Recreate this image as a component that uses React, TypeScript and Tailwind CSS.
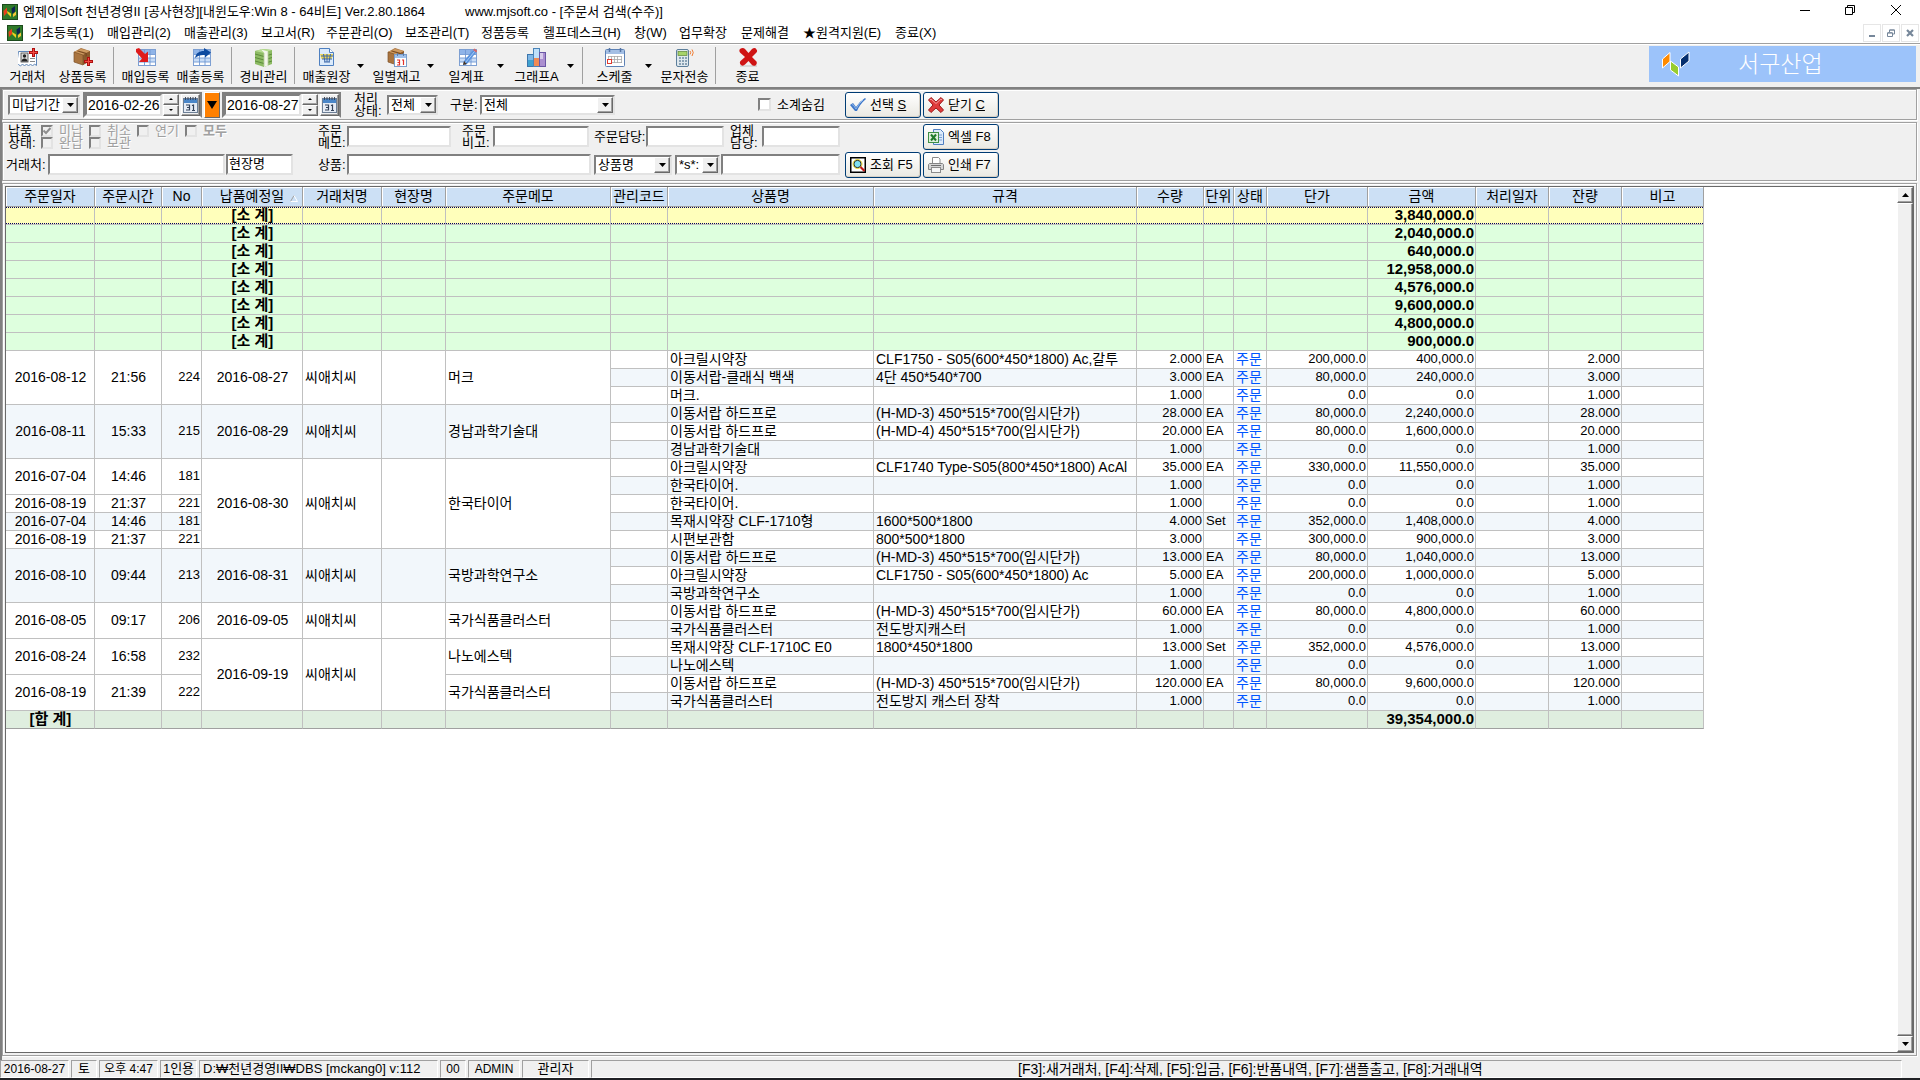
import React, { ReactNode } from 'react';

const UI = "font-['Liberation_Sans','Noto_Sans_CJK_KR',sans-serif]";
const SUNKEN = 'border-2 border-t-[#808080] border-l-[#808080] border-r-[#e3e3e3] border-b-[#e3e3e3]';
const RAISED =
  'bg-[#f0f0f0] border border-t-white border-l-white border-r-[#696969] border-b-[#696969] shadow-[inset_-1px_-1px_0_#a0a0a0]';

/* ---------- icons ---------- */

function AppIcon() {
  return (
    <svg viewBox="0 0 16 16" className="size-4 shrink-0" aria-hidden="true">
      <rect width="16" height="16" fill="#1c4a1c" />
      <rect x="1" y="1" width="14" height="14" fill="#2f7a2a" />
      <path d="M1.500 7 5 3.500V9l-3 3z" fill="#e8401c" />
      <path d="M5 7l4 2.500V13L5.500 9.500z" fill="#f0d21e" />
      <path d="M9.500 4.500L13 2v5.500L10 10z" fill="#0d2350" />
      <path d="M11 10l3-2.500V11l-3 2z" fill="#f5c63a" />
    </svg>
  );
}

function Svg({ children }: { children: ReactNode }) {
  return (
    <svg viewBox="0 0 20 20" className="size-5 shrink-0" aria-hidden="true">
      {children}
    </svg>
  );
}

const RedPlus = ({ x, y }: { x: number; y: number }) => (
  <g transform={`translate(${x} ${y})`}>
    <path d="M3 0h3v3h3v3H6v3H3V6H0V3h3z" fill="#b01010" />
    <path d="M4 1h1v3h3v1H5v3H4V5H1V4h3z" fill="#f24a42" />
  </g>
);

const Box = () => (
  <g>
    <path d="M1 4 8 0l9 3v10l-7 4-9-3z" fill="#a9743f" />
    <path d="M1 4 8 1l9 2-7 4z" fill="#cf9c62" />
    <path d="M10 7l7-4v10l-7 4z" fill="#8a5a2d" />
    <path d="M5 2.600l9 2.400v3l-1.500.8V6L4 3.200z" fill="#7a4b22" />
    <path d="M1 4l9 3v10l-9-3z" fill="none" stroke="#7d5128" strokeWidth=".7" />
  </g>
);

const BlueGrid = () => (
  <g>
    <rect x="2.500" y="1.500" width="17" height="16" fill="#fff" stroke="#7d9fd2" />
    <rect x="3" y="2" width="16" height="4" fill="#8fb4e8" />
    <rect x="3" y="10" width="16" height="4" fill="#c8dcf6" />
    <path d="M3 6.500h16M3 10h16M3 14h16M8.500 2v15M14 2v15" stroke="#6f97d2" strokeWidth=".9" />
  </g>
);

const CardIcon = () => (
  <Svg>
    <path d="M.5 3.500h18v14l-2-1.500-2 2-2-2-2 2-2-2-2 2-2-2-2 2-2-1.500-2 1z" fill="#fff" stroke="#5f86b8" />
    <rect x="3" y="5" width="7" height="9" fill="#d9d9d9" stroke="#444" strokeWidth=".8" />
    <circle cx="6.500" cy="8" r="1.700" fill="#222" />
    <path d="M3.500 13.500c0-4 6-4 6 0z" fill="#222" />
    <path d="M12 10.500h5M12 13.500h5" stroke="#888" />
    <RedPlus x={11} y={0} />
  </Svg>
);
const ProductIcon = () => (
  <Svg>
    <Box />
    <RedPlus x={11} y={9} />
  </Svg>
);
const InboundIcon = () => (
  <Svg>
    <BlueGrid />
    <path d="M0 1l3-1 6 6 3-2.500V14H3l3-3.500L0 4z" fill="#df1b1b" />
  </Svg>
);
const OutboundIcon = () => (
  <Svg>
    <BlueGrid />
    <path d="M4 10C5 5 8 3 13 3V0l7 4.500-6 5V7C10 6.500 7 7.500 4 10z" fill="#0e4ba0" />
  </Svg>
);
const MoneyIcon = () => (
  <Svg>
    <path d="M1 3l8-2 9 1v14l-8 3-9-3z" fill="#8dbb63" />
    <path d="M1 3l8-2 9 1-8 3z" fill="#b7dc91" />
    <path d="M1 6l9 2.500L18 6M1 9.500l9 2.500 8-2.500M1 13l9 2.500 8-2.500" stroke="#5d8c3b" fill="none" />
    <path d="M7 1.500l7 2v14l-4 1.500V4.500z" fill="#f3f6ea" />
    <path d="M10 5v13M14 4v13" stroke="#b7c9a0" strokeWidth=".8" />
  </Svg>
);
const LedgerIcon = () => (
  <Svg>
    <path d="M2.500.5h10l4 4v13h-14z" fill="#dcebfb" stroke="#4f80c0" />
    <path d="M12.500.5v4h4" fill="#fff" stroke="#4f80c0" />
    <path d="M3 6h13l-1.500 5h-10z" fill="#f2d750" />
    <path d="M4 8h12M5 11h10M6.500 6l1.500 8M10 6v8M13.500 6L12 14M7 14h6" stroke="#3b67a8" fill="none" />
  </Svg>
);
const StockIcon = () => (
  <Svg>
    <Box />
    <rect x="7.500" y="6.500" width="12" height="12" fill="#fff" stroke="#7a9cc9" />
    <rect x="8" y="7" width="11" height="3" fill="#9fc0ea" />
    <path d="M10.500 5v3M16.500 5v3" stroke="#5d7ea8" />
    <path d="M10 12h2.500v5H10M10.500 14.500h2M15 12h1.500v5" stroke="#e2322a" strokeWidth="1.200" fill="none" />
  </Svg>
);
const DailyIcon = () => (
  <Svg>
    <BlueGrid />
    <path d="M6 17l1-4L16 2l3 2.500L10 16z" fill="#5a93dd" />
    <path d="M16 2l1.500-1.500 3 2.500L19 4.500z" fill="#d46868" />
    <path d="M6 17l1-4 3 3z" fill="#4a3520" />
    <path d="M8.500 14.500l9-11" stroke="#a9cdf8" />
  </Svg>
);
const ChartIcon = () => (
  <Svg>
    <rect x=".5" y="6.500" width="6" height="12" fill="#7fb7e6" stroke="#3c76ad" />
    <rect x="6.500" y=".5" width="6" height="18" fill="#bfe0fa" stroke="#4b84b8" />
    <rect x="12.500" y="4.500" width="6" height="14" fill="#ab8fd0" stroke="#6a57a5" />
    <rect x="7" y="10" width="5" height="8" fill="#f08a54" />
    <rect x="1" y="12" width="5" height="6" fill="#3fa2cf" />
    <rect x="13" y="5" width="3" height="6" fill="#d6caea" />
  </Svg>
);
const ScheduleIcon = () => (
  <Svg>
    <rect x=".5" y="1.500" width="19" height="17" rx="1" fill="#fff" stroke="#5c81b5" />
    <rect x="1" y="2" width="18" height="4" fill="#a4bfe4" />
    <path d="M4.500 0v4M15.500 0v4" stroke="#5675a4" strokeWidth="1.500" />
    <path d="M3 8.500h14M3 11.500h14M3 14.500h14M3.500 8v7M6.500 8v7M9.500 8v7M12.500 8v7M16.500 8v7" stroke="#a8a8a8" strokeWidth=".8" />
    <rect x="2.500" y="11.500" width="4" height="4" fill="#fff" stroke="#e23b2f" />
  </Svg>
);
const SmsIcon = () => (
  <Svg>
    <rect x="1.500" y="1.500" width="12" height="17" rx="1.500" fill="#dfe8ee" stroke="#5d7f9b" />
    <rect x="3" y="3.500" width="9" height="4" fill="#a6d36a" stroke="#5f8737" strokeWidth=".7" />
    <path d="M4 10h8M4 13h8M4 16h8" stroke="#6f8ba3" strokeWidth="1.600" strokeDasharray="2 1" />
    <path d="M15 3q1.500 1.500 0 3.500M17 1.500q2.500 3 0 6.500" stroke="#ef7b30" fill="none" />
  </Svg>
);
const ExitIcon = () => (
  <Svg>
    <rect x="2" y="17" width="17" height="2" fill="#d8d8d8" />
    <path d="M2 1q3-2 5 0l3.500 4L14 1q3-2 4.500.5Q20 3 18 5l-4 4 4.500 4.500q1 2.500-1 4-2.500 1-4-1L10.500 13 7 16.500q-2 2-4 .5-2-2-.5-4L7 9 2.500 5Q.5 3 2 1z" fill="#cf1414" />
  </Svg>
);

const SelectIcon = () => (
  <svg viewBox="0 0 16 14" className="h-3.5 w-4" aria-hidden="true">
    <path d="M0 7l3-2 3 4q4-6 9-9l1 1Q10 6 7 13H5z" fill="#3f78c9" />
    <path d="M2 7l1-.5L6 11q3-6 7-9" stroke="#8fb7ea" fill="none" />
  </svg>
);
const CloseIcon = () => (
  <svg viewBox="0 0 16 16" className="size-4" aria-hidden="true">
    <path d="M.5 3 3 .5 8 5l5-4.500L15.500 3 11 8l4.500 5L13 15.500 8 11l-5 4.500L.5 13 5 8z" fill="#e03b3b" stroke="#9c1a1a" />
    <path d="M2 3l1-1 5 4.500L13 2l1 1" stroke="#f59b9b" fill="none" />
  </svg>
);
const ExcelIcon = () => (
  <svg viewBox="0 0 16 16" className="size-4" aria-hidden="true">
    <path d="M5.500.5h7l3 3v12h-10z" fill="#dceafa" stroke="#4f7fc0" />
    <path d="M10 6h4M10 8.500h4M10 11h4" stroke="#7ba0d4" />
    <rect x=".5" y="3.500" width="10" height="10" fill="#dff0dc" stroke="#3f8f45" />
    <path d="M3 5.500l5 6M8 5.500l-5 6" stroke="#1f7a2a" strokeWidth="2" />
  </svg>
);
const FindIcon = () => (
  <svg viewBox="0 0 16 16" className="size-4" aria-hidden="true">
    <rect x=".75" y=".75" width="14.500" height="14.500" fill="#fff" stroke="#000" strokeWidth="1.500" />
    <circle cx="7.500" cy="7" r="3.700" fill="#7fe0f2" stroke="#111" />
    <circle cx="7.500" cy="7" r="4.500" fill="none" stroke="#e3d31b" strokeWidth=".9" />
    <path d="M10.500 10l4 4" stroke="#c01818" strokeWidth="2.200" />
  </svg>
);
const PrintIcon = () => (
  <svg viewBox="0 0 16 16" className="size-4" aria-hidden="true">
    <path d="M4.500 6V.5h6l1.500 1.500v4" fill="#fff" stroke="#8b8b8b" />
    <path d="M1.500 6.500h13l1 1v5H.5v-5z" fill="#d5d5d5" stroke="#858585" />
    <rect x="3.500" y="10.500" width="9" height="5" fill="#f7f7f7" stroke="#8b8b8b" />
    <path d="M3 8.500h10" stroke="#6e6e6e" />
  </svg>
);
const CalendarIcon = () => (
  <svg viewBox="0 0 15 16" className="h-4 w-[15px]" aria-hidden="true">
    <rect x=".5" y="1.500" width="14" height="14" fill="#e6ecf5" stroke="#6d7f96" />
    <rect x="1" y="2" width="13" height="4" fill="#4a86c8" />
    <path d="M2.500 0v3M5 0v3M7.500 0v3M10 0v3M12.500 0v3" stroke="#333f52" strokeWidth=".9" />
    <path d="M3 8h3.500v5H3M4 10.500h2.500M9 8.500L10.500 8v5.500M9 13.500h3" stroke="#34435a" strokeWidth="1.200" fill="none" />
  </svg>
);
const Tri = ({ up = false, size = 'h-1 w-[7px]' }: { up?: boolean; size?: string }) => (
  <svg viewBox="0 0 8 4" preserveAspectRatio="none" className={size} aria-hidden="true">
    <path d={up ? 'M0 4 4 0l4 4z' : 'M0 0h8L4 4z'} fill="#000" />
  </svg>
);

/* ---------- form parts ---------- */

function Combo({ label, value, className }: { label: string; value: string; className: string }) {
  return (
    <div className={`relative flex h-5 shrink-0 bg-white ${SUNKEN} ${className}`}>
      <select
        aria-label={label}
        defaultValue={value}
        className="min-w-0 flex-1 appearance-none bg-transparent pl-0.5 text-[13px] leading-4 outline-none"
      >
        <option>{value}</option>
      </select>
      <span className={`pointer-events-none absolute inset-y-0 right-0 flex w-4 items-center justify-center ${RAISED}`}>
        <Tri />
      </span>
    </div>
  );
}

function TextBox({ label, value = '', className }: { label: string; value?: string; className: string }) {
  return (
    <input
      type="text"
      aria-label={label}
      defaultValue={value}
      className={`h-[21px] shrink-0 bg-white px-px pb-1 text-[13px] leading-4 outline-none ${SUNKEN} ${className}`}
    />
  );
}

function DateBox({ label, value }: { label: string; value: string }) {
  return (
    <div className="flex h-[26px] w-[119px] shrink-0 items-center border-2 border-t-[#808080] border-l-[#808080] border-r-[#808080] border-b-white">
      <input
        type="text"
        aria-label={label}
        defaultValue={value}
        className={`h-[22px] w-[77px] bg-white pl-px text-sm leading-4 outline-none ${SUNKEN}`}
      />
      <div className="ml-px flex w-4 flex-col">
        <button type="button" aria-label={`${label} 증가`} className={`flex h-[11px] items-center justify-center ${RAISED}`}>
          <Tri up size="h-0.5 w-1" />
        </button>
        <button type="button" aria-label={`${label} 감소`} className={`flex h-[11px] items-center justify-center ${RAISED}`}>
          <Tri size="h-0.5 w-1" />
        </button>
      </div>
      <button type="button" aria-label={`${label} 달력`} className={`ml-0.5 flex h-[22px] w-[19px] items-center justify-center ${RAISED}`}>
        <CalendarIcon />
      </button>
    </div>
  );
}

function TwoLine({ a, b, className }: { a: string; b: string; className: string }) {
  return (
    <span className={`shrink-0 text-[13px] leading-3 ${className}`}>
      {a}
      <br />
      {b}:
    </span>
  );
}

function Check({ label, checked = false, bold = false, className = 'w-12' }: { label: string; checked?: boolean; bold?: boolean; className?: string }) {
  return (
    <label className={`relative flex h-3 items-center text-[13px] leading-3 text-[#a0a0a0] [text-shadow:1px_1px_0_#fff] ${className}`}>
      <input type="checkbox" disabled defaultChecked={checked} className={`size-3 shrink-0 appearance-none ${SUNKEN}`} />
      {checked && (
        <svg viewBox="0 0 8 8" className="absolute left-0.5 top-0.5 size-2" aria-hidden="true">
          <path d="M.5 3.500 3 6l4.500-5" stroke="#8f8f8f" strokeWidth="2" fill="none" />
        </svg>
      )}
      <span className={bold ? 'ml-1.5 font-bold' : 'ml-1.5'}>{label}</span>
    </label>
  );
}

function Action({ icon, children }: { icon: ReactNode; children: ReactNode }) {
  return (
    <button
      type="button"
      className="flex h-[26px] w-[76px] shrink-0 items-center gap-1 whitespace-nowrap rounded-[3px] border border-[#003c74] bg-gradient-to-b from-white to-[#eae9e2] pl-1 text-[13px] shadow-[inset_-1px_-1px_0_#d6d0c5]"
    >
      {icon}
      <span>{children}</span>
    </button>
  );
}

/* ---------- bars ---------- */

const MENU: [string, string][] = [
  ['기초등록(1)', 'w-[77px]'],
  ['매입관리(2)', 'w-[77px]'],
  ['매출관리(3)', 'w-[77px]'],
  ['보고서(R)', 'w-[65px]'],
  ['주문관리(O)', 'w-[79px]'],
  ['보조관리(T)', 'w-[76px]'],
  ['정품등록', 'w-[62px]'],
  ['헬프데스크(H)', 'w-[91px]'],
  ['창(W)', 'w-[45px]'],
  ['업무확장', 'w-[62px]'],
  ['문제해결', 'w-[62px]'],
  ['★원격지원(E)', 'w-[92px]'],
  ['종료(X)', 'w-[50px]'],
];

type Tool = { label: string; icon: ReactNode; drop?: boolean } | null;
const TOOLS: Tool[] = [
  { label: '거래처', icon: <CardIcon /> },
  { label: '상품등록', icon: <ProductIcon /> },
  null,
  { label: '매입등록', icon: <InboundIcon /> },
  { label: '매출등록', icon: <OutboundIcon /> },
  null,
  { label: '경비관리', icon: <MoneyIcon /> },
  null,
  { label: '매출원장', icon: <LedgerIcon />, drop: true },
  { label: '일별재고', icon: <StockIcon />, drop: true },
  { label: '일계표', icon: <DailyIcon />, drop: true },
  { label: '그래프A', icon: <ChartIcon />, drop: true },
  null,
  { label: '스케줄', icon: <ScheduleIcon />, drop: true },
  { label: '문자전송', icon: <SmsIcon /> },
  null,
  { label: '종료', icon: <ExitIcon /> },
];

function TitleBar() {
  return (
    <header className="flex h-[23px] shrink-0 items-center bg-white pl-0.5 text-[13px]">
      <AppIcon />
      <h1 className="ml-[5px] w-[442px] whitespace-nowrap">엠제이Soft 천년경영II [공사현장][내윈도우:Win 8 - 64비트] Ver.2.80.1864</h1>
      <span className="flex-1 whitespace-nowrap">www.mjsoft.co - [주문서 검색(수주)]</span>
      <div className="flex pb-1">
        <button type="button" aria-label="최소화" className="flex h-4 w-[45px] items-center justify-center">
          <svg viewBox="0 0 10 10" className="size-2.5"><path d="M0 5.500h10" stroke="#000" /></svg>
        </button>
        <button type="button" aria-label="이전 크기로" className="flex h-4 w-[45px] items-center justify-center">
          <svg viewBox="0 0 10 10" className="size-2.5"><path d="M.5 2.500h7v7h-7zM2.500 2.500v-2h7v7h-2" fill="none" stroke="#000" /></svg>
        </button>
        <button type="button" aria-label="닫기" className="flex h-4 w-[48px] items-center justify-center">
          <svg viewBox="0 0 10 10" className="size-2.5"><path d="M0 0l10 10M10 0L0 10" stroke="#000" /></svg>
        </button>
      </div>
    </header>
  );
}

function MenuBar() {
  const box = 'flex size-[18px] items-center justify-center border border-[#e6e6e6]';
  return (
    <nav className="flex h-5 shrink-0 items-center bg-white pl-[7px] pr-px text-[13px]">
      <AppIcon />
      <ul className="ml-[7px] flex flex-1">
        {MENU.map(([t, w]) => (
          <li key={t} className={`whitespace-nowrap ${w}`}>
            <button type="button">{t}</button>
          </li>
        ))}
      </ul>
      <div className="flex gap-px">
        <button type="button" aria-label="창 최소화" className={box}>
          <svg viewBox="0 0 8 8" className="size-2"><path d="M1 7h6" stroke="#76879a" strokeWidth="2" /></svg>
        </button>
        <button type="button" aria-label="창 복원" className={box}>
          <svg viewBox="0 0 8 8" className="size-2"><path d="M.5 4h5v3.500h-5zM.5 3.700h5M2.500 3V1h5v4H6M2.500 1h5" fill="none" stroke="#76879a" /></svg>
        </button>
        <button type="button" aria-label="창 닫기" className={box}>
          <svg viewBox="0 0 8 8" className="size-2"><path d="M1 1l6 6M7 1L1 7" stroke="#76879a" strokeWidth="2.200" /></svg>
        </button>
      </div>
    </nav>
  );
}

function ToolBar() {
  return (
    <div className="flex h-11 shrink-0 border-t border-[#a0a0a0] bg-[#f0f0f0] pr-1 shadow-[inset_0_1px_0_#fff]">
      {TOOLS.map((t, i) =>
        t === null ? (
          <span key={i} className="flex w-2 px-[3px] py-[3px]">
            <span className="w-px bg-[#a0a0a0]" />
          </span>
        ) : (
          <div key={i} className="flex">
            <button type="button" className="flex w-[55px] flex-col items-center whitespace-nowrap pt-1 text-[13px] leading-[18px]">
              {t.icon}
              {t.label}
            </button>
            {t.drop && (
              <button type="button" aria-label={`${t.label} 메뉴`} className="flex w-[15px] items-center pl-[3px]">
                <Tri />
              </button>
            )}
          </div>
        ),
      )}
      <div className="my-0.5 ml-auto flex h-9 w-[267px] items-center bg-[#9cc3fa] text-white">
        <svg viewBox="0 0 28 26" className="ml-[13px] h-[26px] w-7" aria-hidden="true">
          <path d="M.5 8 8 1.500v9L.5 17z" fill="#ff8a00" stroke="#fff" />
          <path d="M8.500 10l8 6v9l-8-6z" fill="#98cc2e" stroke="#fff" />
          <path d="M18.500 8 27 1v9l-8.500 7z" fill="#052f6e" stroke="#fff" />
        </svg>
        <span className="ml-12 text-[23px] font-light leading-8">서구산업</span>
      </div>
    </div>
  );
}

function SearchPanel() {
  const frame = 'border border-[#a0a0a0] shadow-[inset_1px_1px_0_#fff,1px_1px_0_#fff]';
  return (
    <form className="flex shrink-0 flex-col gap-0.5 text-[13px]">
      <div className={`flex h-[31px] items-center pl-[5px] ${frame}`}>
        <Combo label="기간 구분" value="미납기간" className="w-[72px]" />
        <div className="ml-[3px] flex items-center gap-0.5">
          <DateBox label="시작일" value="2016-02-26" />
          <button
            type="button"
            aria-label="기간 선택"
            className="flex h-[26px] w-4 items-center justify-center border border-t-white border-l-white border-r-[#696969] border-b-[#696969] bg-[#ff8000]"
          >
            <Tri size="h-2 w-2.5" />
          </button>
          <DateBox label="종료일" value="2016-08-27" />
        </div>
        <TwoLine a="처리" b="상태" className="ml-[13px] w-[33px]" />
        <Combo label="처리상태" value="전체" className="w-[51px]" />
        <span className="ml-3 w-[30px]">구분:</span>
        <Combo label="구분" value="전체" className="w-[135px]" />
        <label className="ml-[143px] flex w-[87px] items-center gap-1.5">
          <input type="checkbox" className={`size-[13px] appearance-none bg-white ${SUNKEN}`} />
          소계숨김
        </label>
        <div className="flex gap-0.5">
          <Action icon={<SelectIcon />}>선택 <u>S</u></Action>
          <Action icon={<CloseIcon />}>닫기 <u>C</u></Action>
        </div>
      </div>

      <div className={`flex h-[59px] flex-col gap-px pl-px ${frame}`}>
        <div className="flex h-[27px] items-center">
          <TwoLine a="납품" b="상태" className="ml-1 w-[33px]" />
          <div className="flex w-[277px] flex-col">
            <div className="flex">
              <Check label="미납" checked />
              <Check label="취소" />
              <Check label="연기" />
              <Check label="모두" bold />
            </div>
            <div className="flex">
              <Check label="완납" />
              <Check label="보관" />
            </div>
          </div>
          <TwoLine a="주문" b="메모" className="w-[29px]" />
          <TextBox label="주문메모" className="w-[104px]" />
          <TwoLine a="주문" b="비고" className="ml-[11px] w-[31px]" />
          <TextBox label="주문비고" className="w-24" />
          <span className="ml-[5px] w-[52px] whitespace-nowrap">주문담당:</span>
          <TextBox label="주문담당" className="w-[78px]" />
          <TwoLine a="업체" b="담당" className="ml-1.5 w-8" />
          <TextBox label="업체담당" className="w-[78px]" />
          <div className="ml-[83px]">
            <Action icon={<ExcelIcon />}>엑셀 F8</Action>
          </div>
        </div>
        <div className="flex h-[27px] items-center">
          <span className="ml-0.5 w-[42px] whitespace-nowrap">거래처:</span>
          <TextBox label="거래처" className="w-[177px]" />
          <TextBox label="현장명" value="현장명" className="ml-px w-[67px]" />
          <span className="ml-[25px] w-[29px] whitespace-nowrap">상품:</span>
          <TextBox label="상품" className="w-[244px]" />
          <Combo label="검색 항목" value="상품명" className="ml-[3px] w-[78px]" />
          <Combo label="검색 방식" value="*s*:" className="ml-[3px] w-[45px]" />
          <TextBox label="검색어" className="ml-px w-[119px]" />
          <div className="ml-[5px] flex gap-0.5">
            <Action icon={<FindIcon />}>조회 F5</Action>
            <Action icon={<PrintIcon />}>인쇄 F7</Action>
          </div>
        </div>
      </div>
    </form>
  );
}

/* ---------- order table ---------- */

const COLS: [string, string][] = [
  ['주문일자', 'w-[89px]'],
  ['주문시간', 'w-[67px]'],
  ['No', 'w-[40px]'],
  ['납품예정일', 'w-[101px]'],
  ['거래처명', 'w-[79px]'],
  ['현장명', 'w-[64px]'],
  ['주문메모', 'w-[165px]'],
  ['관리코드', 'w-[57px]'],
  ['상품명', 'w-[206px]'],
  ['규격', 'w-[263px]'],
  ['수량', 'w-[67px]'],
  ['단위', 'w-[30px]'],
  ['상태', 'w-[33px]'],
  ['단가', 'w-[101px]'],
  ['금액', 'w-[108px]'],
  ['처리일자', 'w-[73px]'],
  ['잔량', 'w-[73px]'],
  ['비고', 'w-[82px]'],
];

const SUBTOTALS = ['3,840,000.0', '2,040,000.0', '640,000.0', '12,958,000.0', '4,576,000.0', '9,600,000.0', '4,800,000.0', '900,000.0'];

type Row = {
  order?: [number, string, string, string];
  due?: [number, string];
  memo?: [number, string];
  d: [string, string, string, string, string, string];
};

const ROWS: Row[] = [
  { order: [3, '2016-08-12', '21:56', '224'], due: [3, '2016-08-27'], memo: [3, '머크'], d: ['아크릴시약장', 'CLF1750 - S05(600*450*1800) Ac,갈투', '2.000', 'EA', '200,000.0', '400,000.0'] },
  { d: ['이동서랍-클래식 백색', '4단 450*540*700', '3.000', 'EA', '80,000.0', '240,000.0'] },
  { d: ['머크.', '', '1.000', '', '0.0', '0.0'] },
  { order: [3, '2016-08-11', '15:33', '215'], due: [3, '2016-08-29'], memo: [3, '경남과학기술대'], d: ['이동서랍 하드프로', '(H-MD-3) 450*515*700(임시단가)', '28.000', 'EA', '80,000.0', '2,240,000.0'] },
  { d: ['이동서랍 하드프로', '(H-MD-4) 450*515*700(임시단가)', '20.000', 'EA', '80,000.0', '1,600,000.0'] },
  { d: ['경남과학기술대', '', '1.000', '', '0.0', '0.0'] },
  { order: [2, '2016-07-04', '14:46', '181'], due: [5, '2016-08-30'], memo: [5, '한국타이어'], d: ['아크릴시약장', 'CLF1740 Type-S05(800*450*1800) AcAl', '35.000', 'EA', '330,000.0', '11,550,000.0'] },
  { d: ['한국타이어.', '', '1.000', '', '0.0', '0.0'] },
  { order: [1, '2016-08-19', '21:37', '221'], d: ['한국타이어.', '', '1.000', '', '0.0', '0.0'] },
  { order: [1, '2016-07-04', '14:46', '181'], d: ['목재시약장 CLF-1710형', '1600*500*1800', '4.000', 'Set', '352,000.0', '1,408,000.0'] },
  { order: [1, '2016-08-19', '21:37', '221'], d: ['시편보관함', '800*500*1800', '3.000', '', '300,000.0', '900,000.0'] },
  { order: [3, '2016-08-10', '09:44', '213'], due: [3, '2016-08-31'], memo: [3, '국방과학연구소'], d: ['이동서랍 하드프로', '(H-MD-3) 450*515*700(임시단가)', '13.000', 'EA', '80,000.0', '1,040,000.0'] },
  { d: ['아크릴시약장', 'CLF1750 - S05(600*450*1800) Ac', '5.000', 'EA', '200,000.0', '1,000,000.0'] },
  { d: ['국방과학연구소', '', '1.000', '', '0.0', '0.0'] },
  { order: [2, '2016-08-05', '09:17', '206'], due: [2, '2016-09-05'], memo: [2, '국가식품클러스터'], d: ['이동서랍 하드프로', '(H-MD-3) 450*515*700(임시단가)', '60.000', 'EA', '80,000.0', '4,800,000.0'] },
  { d: ['국가식품클러스터', '전도방지캐스터', '1.000', '', '0.0', '0.0'] },
  { order: [2, '2016-08-24', '16:58', '232'], due: [4, '2016-09-19'], memo: [2, '나노에스텍'], d: ['목재시약장 CLF-1710C E0', '1800*450*1800', '13.000', 'Set', '352,000.0', '4,576,000.0'] },
  { d: ['나노에스텍', '', '1.000', '', '0.0', '0.0'] },
  { order: [2, '2016-08-19', '21:39', '222'], memo: [2, '국가식품클러스터'], d: ['이동서랍 하드프로', '(H-MD-3) 450*515*700(임시단가)', '120.000', 'EA', '80,000.0', '9,600,000.0'] },
  { d: ['국가식품클러스터', '전도방지 캐스터 장착', '1.000', '', '0.0', '0.0'] },
];

const CELL = 'h-[18px] overflow-hidden whitespace-nowrap border-r border-b border-[#c0c0c0] pl-0.5 pr-px leading-4 pb-px';
const FOCUS =
  'bg-[#ffffbb] bg-[image:repeating-linear-gradient(90deg,#000060_0_1px,transparent_1px_2px),repeating-linear-gradient(90deg,#000060_0_1px,transparent_1px_2px)] bg-[length:100%_1px,100%_1px] bg-[position:0_0,0_100%] bg-no-repeat bg-origin-padding';

function SumRow({ labelCol, label, amount, bg }: { labelCol: number; label: string; amount: string; bg: string }) {
  return (
    <tr>
      {COLS.map(([name], i) => (
        <td key={name} className={`${CELL} ${bg} text-[15px] font-bold ${i === 14 ? 'text-right' : 'text-center'}`}>
          {i === labelCol ? label : i === 14 ? amount : null}
        </td>
      ))}
    </tr>
  );
}

function OrderTable() {
  return (
    <table className="w-[1698px] table-fixed border-separate border-spacing-0 text-sm">
      <colgroup>
        {COLS.map(([name, w]) => (
          <col key={name} className={w} />
        ))}
      </colgroup>
      <thead>
        <tr>
          {COLS.map(([name]) => (
            <th
              key={name}
              scope="col"
              className="relative h-5 whitespace-nowrap border-r border-b border-[#a0a0a0] bg-[#cce0f5] p-0 font-normal leading-[19px] shadow-[inset_1px_1px_0_#fff]"
            >
              {name}
              {name === '납품예정일' && (
                <svg viewBox="0 0 8 7" className="absolute bottom-1 right-1 h-[7px] w-2" aria-hidden="true">
                  <path d="M.5 6.500 4 .5" stroke="#a0a0a0" />
                  <path d="M4 .5l3.500 6h-7" stroke="#fff" fill="none" />
                </svg>
              )}
            </th>
          ))}
        </tr>
      </thead>
      <tbody>
        {SUBTOTALS.map((amount, i) => (
          <SumRow key={amount} labelCol={3} label="[소 계]" amount={amount} bg={i === 0 ? FOCUS : 'bg-[#deffde]'} />
        ))}
        {ROWS.map((r, i) => {
          const c = `${CELL} ${i % 2 ? 'bg-[#f2f7fb]' : 'bg-white'}`;
          const [name, spec, qty, unit, price, sum] = r.d;
          return (
            <tr key={i}>
              {r.order && (
                <>
                  <td rowSpan={r.order[0]} className={`${c} text-center`}>{r.order[1]}</td>
                  <td rowSpan={r.order[0]} className={`${c} text-center`}>{r.order[2]}</td>
                  <td rowSpan={r.order[0]} className={`${c} text-right text-[13px]`}>{r.order[3]}</td>
                </>
              )}
              {r.due && (
                <>
                  <td rowSpan={r.due[0]} className={`${c} text-center`}>{r.due[1]}</td>
                  <td rowSpan={r.due[0]} className={c}>씨애치씨</td>
                  <td rowSpan={r.due[0]} className={c} />
                </>
              )}
              {r.memo && <td rowSpan={r.memo[0]} className={c}>{r.memo[1]}</td>}
              <td className={c} />
              <td className={c}>{name}</td>
              <td className={c}>{spec}</td>
              <td className={`${c} text-right text-[13px]`}>{qty}</td>
              <td className={`${c} text-[13px]`}>{unit}</td>
              <td className={`${c} text-[#0055ff]`}>주문</td>
              <td className={`${c} text-right text-[13px]`}>{price}</td>
              <td className={`${c} text-right text-[13px]`}>{sum}</td>
              <td className={c} />
              <td className={`${c} text-right text-[13px]`}>{qty}</td>
              <td className={c} />
            </tr>
          );
        })}
        <SumRow labelCol={0} label="[합 계]" amount="39,354,000.0" bg="bg-[#dfeedf] !border-b-[#a0a0a0]" />
      </tbody>
    </table>
  );
}

function StatusBar() {
  const cells: [string, string][] = [
    ['2016-08-27', 'w-[69px] text-xs'],
    ['토', 'w-[26px]'],
    ['오후 4:47', 'w-[59px] text-xs'],
    ['1인용', 'w-[37px]'],
    ['D:₩천년경영II₩DBS [mckang0] v:112', 'w-[239px] !justify-start pl-[3px]'],
    ['00', 'w-[26px] text-xs'],
    ['ADMIN', 'w-[52px] text-xs'],
    ['관리자', 'w-[67px]'],
  ];
  const cell = 'flex h-[18px] items-center justify-center whitespace-nowrap border border-t-[#a0a0a0] border-l-[#a0a0a0] border-r-white border-b-white leading-4';
  return (
    <footer className="flex h-5 shrink-0 gap-0.5 border-b-2 border-[#202125] bg-[#f0f0f0] pr-[18px] text-[13px]">
      {cells.map(([t, w]) => (
        <span key={t} className={`${cell} ${w}`}>{t}</span>
      ))}
      <span className={`${cell} flex-1 !justify-start pl-[426px] text-sm`}>
        [F3]:새거래처, [F4]:삭제, [F5]:입금, [F6]:반품내역, [F7]:샘플출고, [F8]:거래내역
      </span>
    </footer>
  );
}

export default function App() {
  return (
    <div className={`flex h-screen min-h-[800px] flex-col overflow-hidden bg-[#f0f0f0] text-black ${UI}`}>
      <TitleBar />
      <MenuBar />
      <ToolBar />
      <main className="flex min-h-0 flex-1 flex-col gap-0.5 border-t-2 border-l-2 border-t-[#808080] border-l-[#808080] pb-1 pr-[3px]">
        <SearchPanel />
        <section className="flex min-h-0 flex-1 border border-[#a0a0a0] p-0.5 shadow-[inset_1px_1px_0_#fff,1px_1px_0_#fff]">
          <div className="flex min-w-0 flex-1 border border-[#696969] bg-white">
            <div className="min-w-0 flex-1 overflow-hidden">
              <OrderTable />
            </div>
            <div className="flex w-4 shrink-0 flex-col bg-[#f0f0f0]">
              <button type="button" aria-label="위로" className={`flex h-4 items-center justify-center ${RAISED}`}>
                <Tri up />
              </button>
              <div className={`flex-1 ${RAISED}`} />
              <button type="button" aria-label="아래로" className={`flex h-4 items-center justify-center ${RAISED}`}>
                <Tri />
              </button>
            </div>
          </div>
        </section>
      </main>
      <StatusBar />
    </div>
  );
}
